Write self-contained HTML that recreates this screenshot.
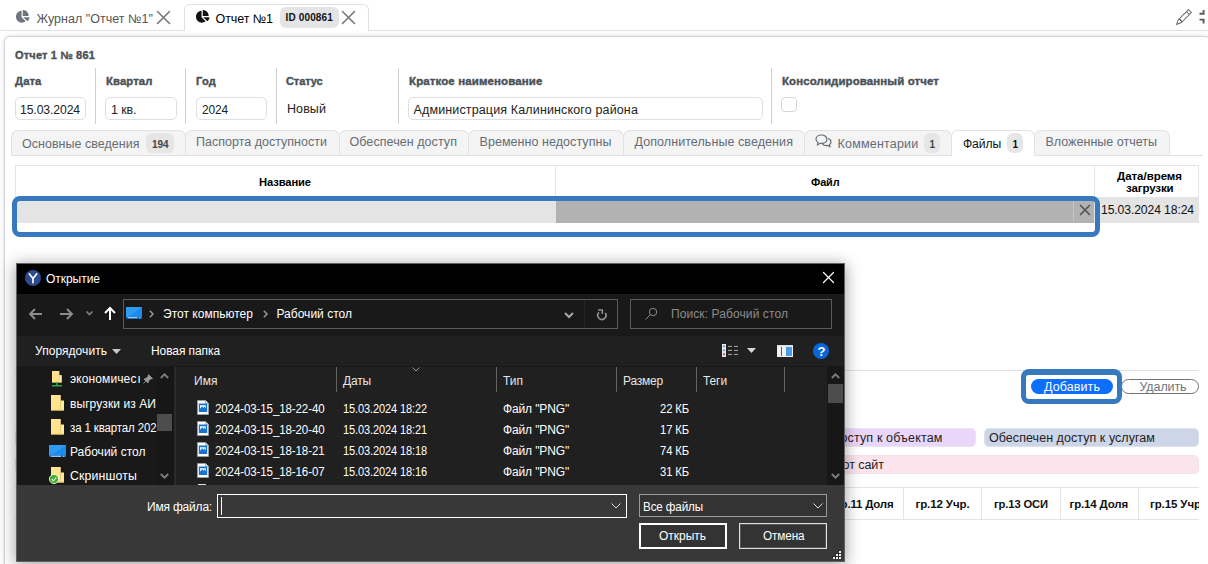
<!DOCTYPE html>
<html lang="ru"><head><meta charset="utf-8"><title>Отчет №1</title>
<style>
html,body{margin:0;padding:0;background:#fff;}
body{width:1208px;height:564px;overflow:hidden;position:relative;font-family:'Liberation Sans', sans-serif;}
div,span,svg{box-sizing:border-box;}
svg{position:absolute;overflow:visible;}
</style></head><body>
<div style="position:absolute;left:0px;top:30px;width:1208px;height:1px;background:#dee2e6;"></div><div style="position:absolute;left:184px;top:4px;width:185px;height:27px;border:1px solid #dee2e6;border-bottom:none;border-radius:6px 6px 0 0;background:#fff;"></div><svg style="left:16px;top:9.8px" width="13.500" height="12.700" viewBox="0 0 544 512"><path fill="#6c757d" d="M527.790 288H290.500l158.030 158.030c6.040 6.040 15.980 6.530 22.190.680 38.700-36.460 65.320-85.610 73.130-140.860 1.340-9.460-6.510-17.850-16.060-17.850zm-15.830-64.800C503.720 103.740 408.260 8.280 288.800.040 279.680-.590 272 7.100 272 16.240V240h223.770c9.140 0 16.820-7.680 16.190-16.800zM224 288V50.710c0-9.550-8.390-17.400-17.840-16.060C86.990 51.490-4.100 155.600.140 280.370 4.500 408.510 114.830 513.590 243.030 511.980c50.400-.630 96.970-16.870 135.260-44.030 7.900-5.600 8.420-17.230 1.570-24.080L224 288z"/></svg><span style="position:absolute;white-space:pre;left:36.5px;top:13.00px;font-size:12.5px;line-height:1;font-weight:400;color:#555;letter-spacing:0.028px;">Журнал &quot;Отчет №1&quot;</span><svg style="left:157px;top:11px" width="13" height="13" viewBox="0 0 13 13"><path d="M0.5 0.5L12.5 12.5M12.5 0.5L0.5 12.5" stroke="#777" stroke-width="1.6" fill="none" stroke-linecap="round"/></svg><svg style="left:196px;top:9.8px" width="13.500" height="12.700" viewBox="0 0 544 512"><path fill="#111" d="M527.790 288H290.500l158.030 158.030c6.040 6.040 15.980 6.530 22.190.680 38.700-36.460 65.320-85.610 73.130-140.860 1.340-9.460-6.510-17.850-16.060-17.850zm-15.830-64.800C503.720 103.740 408.260 8.280 288.800.040 279.680-.590 272 7.100 272 16.240V240h223.770c9.140 0 16.820-7.680 16.190-16.800zM224 288V50.710c0-9.550-8.390-17.400-17.840-16.060C86.990 51.490-4.100 155.600.140 280.370 4.500 408.510 114.830 513.590 243.030 511.980c50.400-.630 96.970-16.870 135.260-44.030 7.900-5.600 8.420-17.230 1.570-24.080L224 288z"/></svg><span style="position:absolute;white-space:pre;left:215.5px;top:13.00px;font-size:12.5px;line-height:1;font-weight:400;color:#000;letter-spacing:-0.070px;">Отчет №1</span><div style="position:absolute;left:280px;top:7px;width:59px;height:20.5px;background:#e3e4e6;border-radius:6px;"></div><span style="position:absolute;white-space:pre;left:285.5px;top:13.00px;font-size:10px;line-height:1;font-weight:700;color:#111;letter-spacing:0.149px;">ID 000861</span><svg style="left:342px;top:11px" width="13" height="13" viewBox="0 0 13 13"><path d="M0.5 0.5L12.5 12.5M12.5 0.5L0.5 12.5" stroke="#777" stroke-width="1.6" fill="none" stroke-linecap="round"/></svg><svg style="left:1176px;top:9px" width="16" height="16" viewBox="0 0 16 16"><path fill="#666b70" d="M12.146.146a.5.5 0 0 1 .708 0l3 3a.5.5 0 0 1 0 .708l-10 10a.5.5 0 0 1-.168.11l-5 2a.5.5 0 0 1-.65-.65l2-5a.5.5 0 0 1 .11-.168l10-10zM11.207 2.500 13.500 4.793 14.793 3.500 12.500 1.207 11.207 2.500zm1.586 3L10.500 3.207 4 9.707V10h.5a.5.500 0 0 1 .5.500v.5h.5a.5.500 0 0 1 .5.500v.5h.293l6.500-6.500zm-9.761 5.175-.106.106-1.528 3.821 3.821-1.528.106-.106A.5.500 0 0 1 5 12.500V12h-.5a.5.500 0 0 1-.5-.5V11h-.5a.5.500 0 0 1-.468-.325z"/></svg><svg style="left:1199px;top:9px" width="14" height="16" viewBox="0 0 14 16"><path d="M0.500 4.800H4.600V1M0.500 10.600H4.600V14.500" stroke="#565c64" stroke-width="1.900" fill="none"/></svg><div style="position:absolute;left:4px;top:36px;width:1207px;height:540px;border:1px solid #d0d3d7;border-radius:6px;background:#fff;box-shadow:0 0 5px rgba(0,0,0,.13);"></div><span style="position:absolute;white-space:pre;left:15px;top:50.00px;font-size:11px;line-height:1;font-weight:700;color:#4b5157;letter-spacing:0.185px;-webkit-text-stroke:0.400px #4b5157;">Отчет 1 № 861</span><span style="position:absolute;white-space:pre;left:15px;top:76.00px;font-size:11px;line-height:1;font-weight:700;color:#4b5157;letter-spacing:0.120px;transform:scaleX(1.0212);transform-origin:0 0;-webkit-text-stroke:0.400px #4b5157;">Дата</span><span style="position:absolute;white-space:pre;left:105.5px;top:76.00px;font-size:11px;line-height:1;font-weight:700;color:#4b5157;letter-spacing:0.120px;transform:scaleX(1.0252);transform-origin:0 0;-webkit-text-stroke:0.400px #4b5157;">Квартал</span><span style="position:absolute;white-space:pre;left:196px;top:76.00px;font-size:11px;line-height:1;font-weight:700;color:#4b5157;letter-spacing:0.250px;-webkit-text-stroke:0.400px #4b5157;">Год</span><span style="position:absolute;white-space:pre;left:286px;top:76.00px;font-size:11px;line-height:1;font-weight:700;color:#4b5157;letter-spacing:-0.096px;-webkit-text-stroke:0.400px #4b5157;">Статус</span><span style="position:absolute;white-space:pre;left:408.5px;top:76.00px;font-size:11px;line-height:1;font-weight:700;color:#4b5157;letter-spacing:0.120px;transform:scaleX(1.0430);transform-origin:0 0;-webkit-text-stroke:0.400px #4b5157;">Краткое наименование</span><span style="position:absolute;white-space:pre;left:781.5px;top:76.00px;font-size:11px;line-height:1;font-weight:700;color:#4b5157;letter-spacing:0.120px;transform:scaleX(1.0387);transform-origin:0 0;-webkit-text-stroke:0.400px #4b5157;">Консолидированный отчет</span><div style="position:absolute;left:95px;top:68px;width:1px;height:56px;background:#d0d0d0;"></div><div style="position:absolute;left:185px;top:68px;width:1px;height:56px;background:#d0d0d0;"></div><div style="position:absolute;left:276px;top:68px;width:1px;height:56px;background:#d0d0d0;"></div><div style="position:absolute;left:398px;top:68px;width:1px;height:56px;background:#d0d0d0;"></div><div style="position:absolute;left:771px;top:68px;width:1px;height:56px;background:#d0d0d0;"></div><div style="position:absolute;left:15px;top:97px;width:71px;height:23px;border:1px solid #dcdfe3;border-radius:5px;background:#fff;"></div><span style="position:absolute;white-space:pre;left:20px;top:104.00px;font-size:12.5px;line-height:1;font-weight:400;color:#222;letter-spacing:-0.120px;transform:scaleX(0.9778);transform-origin:0 0;">15.03.2024</span><div style="position:absolute;left:105px;top:97px;width:72px;height:23px;border:1px solid #dcdfe3;border-radius:5px;background:#fff;"></div><span style="position:absolute;white-space:pre;left:111px;top:104.00px;font-size:12.5px;line-height:1;font-weight:400;color:#222;letter-spacing:-0.103px;">1 кв.</span><div style="position:absolute;left:196px;top:97px;width:71px;height:23px;border:1px solid #dcdfe3;border-radius:5px;background:#fff;"></div><span style="position:absolute;white-space:pre;left:202px;top:104.00px;font-size:12.5px;line-height:1;font-weight:400;color:#222;letter-spacing:-0.120px;transform:scaleX(0.9512);transform-origin:0 0;">2024</span><span style="position:absolute;white-space:pre;left:287px;top:103.00px;font-size:12.5px;line-height:1;font-weight:400;color:#222;letter-spacing:0.081px;">Новый</span><div style="position:absolute;left:408px;top:97px;width:355px;height:23px;border:1px solid #dcdfe3;border-radius:5px;background:#fff;"></div><span style="position:absolute;white-space:pre;left:413.5px;top:104.00px;font-size:12.5px;line-height:1;font-weight:400;color:#222;letter-spacing:0.140px;">Администрация Калининского района</span><div style="position:absolute;left:781px;top:97px;width:16px;height:15px;border:1px solid #d5d8dc;border-radius:4px;background:#fff;"></div><div style="position:absolute;left:11px;top:155px;width:1192px;height:1px;background:#dfe2e5;"></div><div style="position:absolute;left:11px;top:130px;width:175px;height:25px;border:1px solid #dfe2e5;border-bottom:none;border-radius:7px 7px 0 0;background:#f4f4f4;"></div><div style="position:absolute;left:185px;top:130px;width:155px;height:25px;border:1px solid #dfe2e5;border-bottom:none;border-radius:7px 7px 0 0;background:#f4f4f4;"></div><div style="position:absolute;left:339px;top:130px;width:130px;height:25px;border:1px solid #dfe2e5;border-bottom:none;border-radius:7px 7px 0 0;background:#f4f4f4;"></div><div style="position:absolute;left:468px;top:130px;width:156px;height:25px;border:1px solid #dfe2e5;border-bottom:none;border-radius:7px 7px 0 0;background:#f4f4f4;"></div><div style="position:absolute;left:623px;top:130px;width:182px;height:25px;border:1px solid #dfe2e5;border-bottom:none;border-radius:7px 7px 0 0;background:#f4f4f4;"></div><div style="position:absolute;left:804px;top:130px;width:148px;height:25px;border:1px solid #dfe2e5;border-bottom:none;border-radius:7px 7px 0 0;background:#f4f4f4;"></div><div style="position:absolute;left:951px;top:130px;width:84px;height:26px;border:1px solid #dfe2e5;border-bottom:none;border-radius:7px 7px 0 0;background:#fff;"></div><div style="position:absolute;left:1034px;top:130px;width:136px;height:25px;border:1px solid #dfe2e5;border-bottom:none;border-radius:7px 7px 0 0;background:#f4f4f4;"></div><span style="position:absolute;white-space:pre;left:22px;top:138.00px;font-size:12.5px;line-height:1;font-weight:400;color:#646c74;letter-spacing:0.023px;">Основные сведения</span><div style="position:absolute;left:146px;top:133px;width:28px;height:20px;background:#e6e6e6;border-radius:6px;"></div><span style="position:absolute;white-space:pre;left:152px;top:140.00px;font-size:10px;line-height:1;font-weight:700;color:#444;letter-spacing:-0.062px;">194</span><span style="position:absolute;white-space:pre;left:196px;top:136.00px;font-size:12.5px;line-height:1;font-weight:400;color:#646c74;letter-spacing:0.010px;">Паспорта доступности</span><span style="position:absolute;white-space:pre;left:349.5px;top:136.00px;font-size:12.5px;line-height:1;font-weight:400;color:#646c74;letter-spacing:0.063px;">Обеспечен доступ</span><span style="position:absolute;white-space:pre;left:479.5px;top:136.00px;font-size:12.5px;line-height:1;font-weight:400;color:#646c74;letter-spacing:0.059px;">Временно недоступны</span><span style="position:absolute;white-space:pre;left:634.5px;top:136.00px;font-size:12.5px;line-height:1;font-weight:400;color:#646c74;letter-spacing:0.075px;">Дополнительные сведения</span><svg style="left:815px;top:134px" width="17" height="14" viewBox="0 0 17 14"><path d="M6.5 1C3.500 1 1 2.800 1 5.200c0 1.300.8 2.500 2 3.200L2.500 10.800 5.200 9.300c.4.100.8.100 1.300.100 3 0 5.500-1.800 5.500-4.200S9.500 1 6.500 1z" fill="none" stroke="#646c74" stroke-width="1.200"/><path d="M13.300 4.500c1.600.6 2.700 1.900 2.700 3.400 0 1.100-.6 2.100-1.600 2.800l.5 2-2.300-1.200c-.4.100-.8.100-1.200.100-1.800 0-3.300-.7-4.100-1.800" fill="none" stroke="#646c74" stroke-width="1.200"/></svg><span style="position:absolute;white-space:pre;left:837.5px;top:138.00px;font-size:12.5px;line-height:1;font-weight:400;color:#646c74;letter-spacing:0.206px;">Комментарии</span><div style="position:absolute;left:924px;top:133px;width:16px;height:20px;background:#e6e6e6;border-radius:6px;"></div><span style="position:absolute;white-space:pre;left:929.5px;top:140.00px;font-size:10px;line-height:1;font-weight:700;color:#444;">1</span><span style="position:absolute;white-space:pre;left:963px;top:138.00px;font-size:12.5px;line-height:1;font-weight:400;color:#111;letter-spacing:-0.120px;transform:scaleX(0.9714);transform-origin:0 0;">Файлы</span><div style="position:absolute;left:1007px;top:133px;width:16px;height:20px;background:#e6e6e6;border-radius:6px;"></div><span style="position:absolute;white-space:pre;left:1012.5px;top:140.00px;font-size:10px;line-height:1;font-weight:700;color:#111;">1</span><span style="position:absolute;white-space:pre;left:1045.5px;top:136.00px;font-size:12.5px;line-height:1;font-weight:400;color:#646c74;letter-spacing:0.014px;">Вложенные отчеты</span><div style="position:absolute;left:15px;top:165px;width:1184px;height:33px;border:1px solid #e3e5e8;border-bottom:none;"></div><div style="position:absolute;left:555px;top:165px;width:1px;height:32px;background:#e3e5e8;"></div><div style="position:absolute;left:1094px;top:165px;width:1px;height:32px;background:#e3e5e8;"></div><span style="position:absolute;white-space:pre;left:259px;top:177.00px;font-size:11.5px;line-height:1;font-weight:700;color:#000;letter-spacing:-0.120px;transform:scaleX(0.9749);transform-origin:0 0;">Название</span><span style="position:absolute;white-space:pre;left:810.5px;top:177.00px;font-size:11.5px;line-height:1;font-weight:700;color:#000;letter-spacing:-0.120px;transform:scaleX(0.9464);transform-origin:0 0;">Файл</span><span style="position:absolute;white-space:pre;left:1117px;top:171.00px;font-size:11.5px;line-height:1;font-weight:700;color:#000;letter-spacing:-0.037px;">Дата/время</span><span style="position:absolute;white-space:pre;left:1126px;top:183.00px;font-size:11.5px;line-height:1;font-weight:700;color:#000;letter-spacing:-0.115px;">загрузки</span><div style="position:absolute;left:15px;top:197px;width:541px;height:26px;background:#e4e4e4;"></div><div style="position:absolute;left:556px;top:197px;width:538px;height:26px;background:#b2b2b2;"></div><div style="position:absolute;left:1094px;top:197px;width:105px;height:26px;background:#e4e4e4;"></div><div style="position:absolute;left:1073px;top:198px;width:1px;height:24px;background:#c4c4c4;"></div><svg style="left:1079.5px;top:205px" width="10" height="10" viewBox="0 0 10 10"><path d="M0.5 0.5L9.5 9.5M9.5 0.5L0.5 9.5" stroke="#555" stroke-width="1.7" fill="none" stroke-linecap="round"/></svg><span style="position:absolute;white-space:pre;left:1101px;top:204.00px;font-size:12.5px;line-height:1;font-weight:400;color:#111;letter-spacing:-0.120px;transform:scaleX(0.9748);transform-origin:0 0;">15.03.2024 18:24</span><div style="position:absolute;left:12px;top:196px;width:1088px;height:41px;border:5px solid #3778bf;border-radius:8px;"></div><div style="position:absolute;left:15px;top:370px;width:1184px;height:1px;background:#dee2e6;"></div><div style="position:absolute;left:1021px;top:369px;width:100.5px;height:34.5px;border:5px solid #3778bf;border-top-width:6px;border-radius:8px;"></div><div style="position:absolute;left:1030.5px;top:379px;width:82.5px;height:15px;background:#0d6efd;border-radius:8px;"></div><span style="position:absolute;white-space:pre;left:1044px;top:381.00px;font-size:12.5px;line-height:1;font-weight:400;color:#fff;letter-spacing:0.094px;">Добавить</span><div style="position:absolute;left:1121px;top:379px;width:77.5px;height:15px;background:#fff;border:1px solid #6c757d;border-radius:8px;"></div><span style="position:absolute;white-space:pre;left:1139.5px;top:381.00px;font-size:12.5px;line-height:1;font-weight:400;color:#6c757d;letter-spacing:-0.105px;">Удалить</span><div style="position:absolute;left:15px;top:427.5px;width:960.5px;height:19.5px;background:#ead6fb;border-radius:5px;border:1px solid #e9e4f2;"></div><span style="position:absolute;white-space:pre;left:833px;top:432.00px;font-size:12.5px;line-height:1;font-weight:400;color:#222;letter-spacing:0.147px;">доступ к объектам</span><div style="position:absolute;left:984px;top:427.5px;width:214.5px;height:19.5px;background:#cdd5e8;border-radius:5px;border:1px solid #dde2ee;"></div><span style="position:absolute;white-space:pre;left:989px;top:432.00px;font-size:12.5px;line-height:1;font-weight:400;color:#222;letter-spacing:0.053px;">Обеспечен доступ к услугам</span><div style="position:absolute;left:15px;top:455px;width:1183.5px;height:18.5px;background:#fbe4ec;border-radius:5px;border:1px solid #f3e3e9;"></div><span style="position:absolute;white-space:pre;left:842.5px;top:459.00px;font-size:12.5px;line-height:1;font-weight:400;color:#222;letter-spacing:-0.042px;">от сайт</span><div style="position:absolute;left:15px;top:487px;width:1184px;height:1px;background:#e3e5e8;"></div><div style="position:absolute;left:15px;top:519px;width:1184px;height:1px;background:#e3e5e8;"></div><div style="position:absolute;left:903px;top:487px;width:1px;height:33px;background:#e3e5e8;"></div><div style="position:absolute;left:981px;top:487px;width:1px;height:33px;background:#e3e5e8;"></div><div style="position:absolute;left:1060px;top:487px;width:1px;height:33px;background:#e3e5e8;"></div><div style="position:absolute;left:1138px;top:487px;width:1px;height:33px;background:#e3e5e8;"></div><span style="position:absolute;white-space:pre;left:836px;top:499.00px;font-size:11.5px;line-height:1;font-weight:700;color:#111;letter-spacing:-0.195px;">гр.11 Доля</span><span style="position:absolute;white-space:pre;left:915.5px;top:499.00px;font-size:11.5px;line-height:1;font-weight:700;color:#111;letter-spacing:-0.105px;">гр.12 Учр.</span><span style="position:absolute;white-space:pre;left:993.5px;top:499.00px;font-size:11.5px;line-height:1;font-weight:700;color:#111;letter-spacing:-0.120px;transform:scaleX(0.9741);transform-origin:0 0;">гр.13 ОСИ</span><span style="position:absolute;white-space:pre;left:1069.5px;top:499.00px;font-size:11.5px;line-height:1;font-weight:700;color:#111;letter-spacing:-0.159px;">гр.14 Доля</span><span style="position:absolute;white-space:pre;left:1150px;top:499.00px;font-size:11.5px;line-height:1;font-weight:700;color:#111;letter-spacing:-0.105px;">гр.15 Учр.</span><div style="position:absolute;left:1199px;top:480px;width:9px;height:50px;background:#fff;"></div><div style="position:absolute;left:16px;top:263px;width:829px;height:299px;background:#626262;box-shadow:0 2px 14px 1px rgba(0,0,0,.36);"></div><div style="position:absolute;left:17px;top:264px;width:827px;height:297px;background:#383838;"></div><div style="position:absolute;left:17px;top:264px;width:827px;height:30px;background:#000;"></div><div style="position:absolute;left:17px;top:294px;width:827px;height:42px;background:#191919;"></div><div style="position:absolute;left:17px;top:336px;width:827px;height:30px;background:#202020;"></div><div style="position:absolute;left:17px;top:366px;width:157px;height:119px;background:#191919;"></div><div style="position:absolute;left:157px;top:366px;width:17px;height:119px;background:#171717;"></div><div style="position:absolute;left:174px;top:366px;width:2px;height:119px;background:#2b2b2b;"></div><div style="position:absolute;left:176px;top:366px;width:652px;height:119px;background:#202020;"></div><div style="position:absolute;left:827px;top:366px;width:17px;height:119px;background:#171717;"></div><div style="position:absolute;left:17px;top:366px;width:810px;height:1px;background:#191919;"></div><svg style="left:25px;top:270px" width="16" height="16" viewBox="0 0 16 16"><circle cx="8" cy="8" r="8" fill="#2c4a8c"/><path d="M4.200 3.800L8 8.600V12.800M11.800 3.800L8 8.600" stroke="#fff" stroke-width="1.650" fill="none" stroke-linecap="round" stroke-linejoin="round"/></svg><span style="position:absolute;white-space:pre;left:46px;top:273.00px;font-size:12px;line-height:1;font-weight:400;color:#fff;letter-spacing:-0.033px;">Открытие</span><svg style="left:823px;top:272px" width="11" height="11" viewBox="0 0 11 11"><path d="M0.5 0.5L10.5 10.5M10.5 0.5L0.5 10.5" stroke="#fff" stroke-width="1.2" fill="none" stroke-linecap="round"/></svg><svg style="left:29px;top:308px" width="14" height="12" viewBox="0 0 14 12"><path d="M6 1L1 6L6 11M1 6H13" stroke="#8c8c8c" stroke-width="1.900" fill="none"/></svg><svg style="left:59px;top:308px" width="14" height="12" viewBox="0 0 14 12"><path d="M8 1L13 6L8 11M13 6H1" stroke="#8c8c8c" stroke-width="1.900" fill="none"/></svg><svg style="left:86px;top:311px" width="7" height="5" viewBox="0 0 7 5"><path d="M0.500 0.500L3.500 3.500L6.500 0.500" stroke="#808080" stroke-width="1.700" fill="none"/></svg><svg style="left:104px;top:307px" width="12" height="14" viewBox="0 0 12 14"><path d="M1 6L6 1L11 6M6 1V13" stroke="#fff" stroke-width="2" fill="none"/></svg><div style="position:absolute;left:123px;top:299px;width:495px;height:30px;border:1px solid #5a5a5a;background:#191919;"></div><div style="position:absolute;left:584px;top:300px;width:1px;height:28px;background:#252525;"></div><svg style="left:126px;top:307px" width="16" height="11.500" viewBox="0 0 17 12" preserveAspectRatio="none"><rect x="0" y="0" width="17" height="12" fill="#2f9bf2"/><path d="M0 12L17 0V12Z" fill="#1a8cf0"/><rect x="0" y="10.500" width="17" height="1.500" fill="#0a5fb5"/><rect x="2" y="10.800" width="10" height="0.800" fill="#fff"/><rect x="14" y="10.800" width="1.500" height="0.800" fill="#fff"/></svg><svg style="left:149px;top:310px" width="5" height="8" viewBox="0 0 5 8"><path d="M0.800 0.800L4 4L0.800 7.200" stroke="#999" stroke-width="1.500" fill="none"/></svg><span style="position:absolute;white-space:pre;left:163px;top:308.00px;font-size:12px;line-height:1;font-weight:400;color:#fff;letter-spacing:0.019px;">Этот компьютер</span><svg style="left:263px;top:310px" width="5" height="8" viewBox="0 0 5 8"><path d="M0.800 0.800L4 4L0.800 7.200" stroke="#999" stroke-width="1.500" fill="none"/></svg><span style="position:absolute;white-space:pre;left:276.5px;top:308.00px;font-size:12px;line-height:1;font-weight:400;color:#fff;letter-spacing:0.014px;">Рабочий стол</span><svg style="left:564px;top:312px" width="10" height="7" viewBox="0 0 10 7"><path d="M1 1L5 5L9 1" stroke="#a8a8a8" stroke-width="2" fill="none"/></svg><svg style="left:590px;top:304px" width="24" height="22" viewBox="590 304 24 22"><path d="M605.300 313A4.100 4.100 0 1 1 599 312.400" stroke="#8e8e8e" stroke-width="1.700" fill="none"/><path d="M598 310H602.300V314" stroke="#8e8e8e" stroke-width="1.600" fill="none"/></svg><div style="position:absolute;left:630px;top:299px;width:202px;height:30px;border:1px solid #5a5a5a;background:#191919;"></div><svg style="left:645px;top:307px" width="13" height="13" viewBox="0 0 13 13"><circle cx="8" cy="5" r="3.700" stroke="#8a8a8a" stroke-width="1" fill="none"/><path d="M5.400 7.600L0.500 12.500" stroke="#8a8a8a" stroke-width="1"/></svg><span style="position:absolute;white-space:pre;left:671px;top:308.00px;font-size:12px;line-height:1;font-weight:400;color:#8c8c8c;letter-spacing:0.092px;">Поиск: Рабочий стол</span><span style="position:absolute;white-space:pre;left:35px;top:345.00px;font-size:12px;line-height:1;font-weight:400;color:#fff;letter-spacing:0.053px;">Упорядочить</span><svg style="left:112px;top:349px" width="9" height="5" viewBox="0 0 9 5"><path d="M0 0H9L4.500 5Z" fill="#c8c8c8"/></svg><span style="position:absolute;white-space:pre;left:151px;top:345.00px;font-size:12px;line-height:1;font-weight:400;color:#fff;letter-spacing:-0.087px;">Новая папка</span><svg style="left:722px;top:344px" width="17" height="13" viewBox="0 0 17 13"><rect x="0" y="0" width="4" height="13" fill="#e8e8e8"/><rect x="1.200" y="1.5" width="1.600" height="1.600" fill="#4a7fc0"/><rect x="6" y="1.9" width="4" height="0.900" fill="#bbb"/><rect x="12" y="1.9" width="4" height="0.900" fill="#bbb"/><rect x="1.200" y="5.5" width="1.600" height="1.600" fill="#4a7fc0"/><rect x="6" y="5.9" width="4" height="0.900" fill="#bbb"/><rect x="12" y="5.9" width="4" height="0.900" fill="#bbb"/><rect x="1.200" y="9.5" width="1.600" height="1.600" fill="#4a7fc0"/><rect x="6" y="9.9" width="4" height="0.900" fill="#bbb"/><rect x="12" y="9.9" width="4" height="0.900" fill="#bbb"/><rect x="1.200" y="9.500" width="1.600" height="1.600" fill="#d04040"/></svg><svg style="left:747px;top:348px" width="9" height="5" viewBox="0 0 9 5"><path d="M0 0H9L4.500 5Z" fill="#d8d8d8"/></svg><svg style="left:777px;top:345px" width="16" height="12" viewBox="0 0 16 12"><rect x="0" y="0" width="16" height="12" fill="#f2f2f2"/><rect x="9" y="2" width="6" height="9" fill="#4a9be8"/><rect x="4" y="2" width="1" height="9" fill="#555"/><rect x="0" y="0" width="16" height="1.500" fill="#ddd"/></svg><svg style="left:813px;top:343px" width="16" height="16" viewBox="0 0 16 16"><circle cx="8" cy="8" r="8" fill="#0a66d8"/></svg><span style="position:absolute;white-space:pre;left:817.5px;top:345.00px;font-size:13px;line-height:1;font-weight:700;color:#fff;">?</span><svg style="left:52px;top:371px" width="9.8" height="11.5" viewBox="0 0 13 15.500" preserveAspectRatio="none"><path d="M0 0H9.800V15.500H0Z" fill="#ffe38f"/><path d="M9.300 5.500H13V15.500H9.300Z" fill="#ffe9a6"/><path d="M9.500 5.500V15.500" stroke="#e9c766" stroke-width=".8"/><path d="M0 14.500H13V15.500H0Z" fill="#f3cf6a" opacity=".7"/></svg><svg style="left:52px;top:382px" width="10" height="5" viewBox="0 0 10 5"><path d="M5 0V3.500" stroke="#25a83a" stroke-width="1.600" fill="none"/><path d="M0 3.800H10" stroke="#2fc14a" stroke-width="1.300" fill="none"/></svg><span style="position:absolute;white-space:pre;left:70px;top:373.00px;font-size:12px;line-height:1;font-weight:400;color:#fff;letter-spacing:0.113px;">экономичес</span><span style="position:absolute;white-space:pre;left:137.8px;top:373.00px;font-size:12px;line-height:1;font-weight:400;color:#fff;width:2.300px;overflow:hidden;">к</span><svg style="left:143px;top:374px" width="10" height="10" viewBox="0 0 10 10"><path d="M5.500 0.500L9.500 4.500L7.500 5L5.500 7L5 9L1 5L3 4.500L5 2.500ZM3 7L0.500 9.500" fill="#9a9a9a" stroke="#9a9a9a" stroke-width=".8"/></svg><svg style="left:160px;top:373px" width="9" height="6" viewBox="0 0 9 6"><path d="M0.800 5L4.500 1.300L8.200 5" stroke="#7d7d7d" stroke-width="1.900" fill="none"/></svg><svg style="left:51px;top:395px" width="13" height="15.5" viewBox="0 0 13 15.500" preserveAspectRatio="none"><path d="M0 0H9.800V15.500H0Z" fill="#ffe38f"/><path d="M9.300 5.500H13V15.500H9.300Z" fill="#ffe9a6"/><path d="M9.500 5.500V15.500" stroke="#e9c766" stroke-width=".8"/><path d="M0 14.500H13V15.500H0Z" fill="#f3cf6a" opacity=".7"/></svg><span style="position:absolute;white-space:pre;left:70px;top:398.00px;font-size:12px;line-height:1;font-weight:400;color:#fff;letter-spacing:0.080px;">выгрузки из АИ</span><svg style="left:51px;top:419px" width="13" height="15.5" viewBox="0 0 13 15.500" preserveAspectRatio="none"><path d="M0 0H9.800V15.500H0Z" fill="#ffe38f"/><path d="M9.300 5.500H13V15.500H9.300Z" fill="#ffe9a6"/><path d="M9.500 5.500V15.500" stroke="#e9c766" stroke-width=".8"/><path d="M0 14.500H13V15.500H0Z" fill="#f3cf6a" opacity=".7"/></svg><span style="position:absolute;white-space:pre;left:70px;top:422.00px;font-size:12px;line-height:1;font-weight:400;color:#fff;letter-spacing:-0.120px;transform:scaleX(0.9551);transform-origin:0 0;">за 1 квартал 202</span><div style="position:absolute;left:157px;top:414px;width:15px;height:17px;background:#4d4d4d;"></div><svg style="left:49px;top:445px" width="17" height="12" viewBox="0 0 17 12"><rect x="0" y="0" width="17" height="12" fill="#2f9bf2"/><path d="M0 12L17 0V12Z" fill="#1a8cf0"/><rect x="0" y="10.500" width="17" height="1.500" fill="#0a5fb5"/><rect x="2" y="10.800" width="10" height="0.800" fill="#fff"/><rect x="14" y="10.800" width="1.500" height="0.800" fill="#fff"/></svg><span style="position:absolute;white-space:pre;left:70px;top:446.00px;font-size:12px;line-height:1;font-weight:400;color:#fff;letter-spacing:0.014px;">Рабочий стол</span><svg style="left:51px;top:467px" width="13" height="15.5" viewBox="0 0 13 15.500" preserveAspectRatio="none"><path d="M0 0H9.800V15.500H0Z" fill="#ffe38f"/><path d="M9.300 5.500H13V15.500H9.300Z" fill="#ffe9a6"/><path d="M9.500 5.500V15.500" stroke="#e9c766" stroke-width=".8"/><path d="M0 14.500H13V15.500H0Z" fill="#f3cf6a" opacity=".7"/></svg><svg style="left:49px;top:474px" width="10" height="10" viewBox="0 0 10 10"><circle cx="5" cy="5" r="4.600" fill="#43b02a" stroke="#fff" stroke-width=".8"/><path d="M2.800 5.200L4.400 6.800L7.300 3.600" stroke="#fff" stroke-width="1.100" fill="none"/></svg><span style="position:absolute;white-space:pre;left:70px;top:470.00px;font-size:12px;line-height:1;font-weight:400;color:#fff;letter-spacing:0.120px;transform:scaleX(1.0283);transform-origin:0 0;">Скриншоты</span><svg style="left:160px;top:473px" width="9" height="6" viewBox="0 0 9 6"><path d="M0.800 1L4.500 4.700L8.200 1" stroke="#7d7d7d" stroke-width="1.900" fill="none"/></svg><span style="position:absolute;white-space:pre;left:194px;top:375.00px;font-size:12px;line-height:1;font-weight:400;color:#e6e6e6;letter-spacing:0.042px;">Имя</span><span style="position:absolute;white-space:pre;left:343px;top:375.00px;font-size:12px;line-height:1;font-weight:400;color:#e6e6e6;letter-spacing:-0.168px;">Даты</span><span style="position:absolute;white-space:pre;left:503px;top:375.00px;font-size:12px;line-height:1;font-weight:400;color:#e6e6e6;letter-spacing:-0.005px;">Тип</span><span style="position:absolute;white-space:pre;left:623px;top:375.00px;font-size:12px;line-height:1;font-weight:400;color:#e6e6e6;letter-spacing:-0.208px;">Размер</span><span style="position:absolute;white-space:pre;left:703px;top:375.00px;font-size:12px;line-height:1;font-weight:400;color:#e6e6e6;letter-spacing:-0.105px;">Теги</span><div style="position:absolute;left:336px;top:367px;width:1px;height:25px;background:#636363;"></div><div style="position:absolute;left:496px;top:367px;width:1px;height:25px;background:#636363;"></div><div style="position:absolute;left:616px;top:367px;width:1px;height:25px;background:#636363;"></div><div style="position:absolute;left:696px;top:367px;width:1px;height:25px;background:#636363;"></div><div style="position:absolute;left:784px;top:367px;width:1px;height:25px;background:#636363;"></div><svg style="left:412px;top:367px" width="8" height="5" viewBox="0 0 8 5"><path d="M0.500 0.500L4 4L7.500 0.500" stroke="#9a9a9a" stroke-width="1" fill="none"/></svg><svg style="left:197px;top:400px" width="12" height="15" viewBox="0 0 12 15"><path d="M0.500 0.500H8.500L11.500 3.500V14.500H0.500Z" fill="#fff" stroke="#9aa0a8" stroke-width=".8"/><path d="M8.500 0.500V3.500H11.500" fill="#dfe3e8" stroke="#9aa0a8" stroke-width=".6"/><rect x="1.800" y="3.500" width="8.400" height="8.500" fill="#1673d1"/><path d="M3 5.200H8.800V8.500L7.600 6.500L6.500 8L5.200 6.300L3 8.800Z" fill="#fff" opacity=".95"/></svg><span style="position:absolute;white-space:pre;left:215px;top:403.00px;font-size:12px;line-height:1;font-weight:400;color:#fff;letter-spacing:-0.120px;transform:scaleX(0.9621);transform-origin:0 0;">2024-03-15_18-22-40</span><span style="position:absolute;white-space:pre;left:343px;top:403.00px;font-size:12px;line-height:1;font-weight:400;color:#fff;letter-spacing:-0.120px;transform:scaleX(0.9180);transform-origin:0 0;">15.03.2024 18:22</span><span style="position:absolute;white-space:pre;left:503px;top:403.00px;font-size:12px;line-height:1;font-weight:400;color:#fff;letter-spacing:-0.136px;">Файл &quot;PNG&quot;</span><span style="position:absolute;white-space:pre;left:660px;top:403.00px;font-size:12px;line-height:1;font-weight:400;color:#fff;letter-spacing:-0.120px;transform:scaleX(0.9371);transform-origin:0 0;">22 КБ</span><svg style="left:197px;top:421px" width="12" height="15" viewBox="0 0 12 15"><path d="M0.500 0.500H8.500L11.500 3.500V14.500H0.500Z" fill="#fff" stroke="#9aa0a8" stroke-width=".8"/><path d="M8.500 0.500V3.500H11.500" fill="#dfe3e8" stroke="#9aa0a8" stroke-width=".6"/><rect x="1.800" y="3.500" width="8.400" height="8.500" fill="#1673d1"/><path d="M3 5.200H8.800V8.500L7.600 6.500L6.500 8L5.200 6.300L3 8.800Z" fill="#fff" opacity=".95"/></svg><span style="position:absolute;white-space:pre;left:215px;top:424.00px;font-size:12px;line-height:1;font-weight:400;color:#fff;letter-spacing:-0.120px;transform:scaleX(0.9621);transform-origin:0 0;">2024-03-15_18-20-40</span><span style="position:absolute;white-space:pre;left:343px;top:424.00px;font-size:12px;line-height:1;font-weight:400;color:#fff;letter-spacing:-0.120px;transform:scaleX(0.9180);transform-origin:0 0;">15.03.2024 18:21</span><span style="position:absolute;white-space:pre;left:503px;top:424.00px;font-size:12px;line-height:1;font-weight:400;color:#fff;letter-spacing:-0.136px;">Файл &quot;PNG&quot;</span><span style="position:absolute;white-space:pre;left:660px;top:424.00px;font-size:12px;line-height:1;font-weight:400;color:#fff;letter-spacing:-0.120px;transform:scaleX(0.9371);transform-origin:0 0;">17 КБ</span><svg style="left:197px;top:442px" width="12" height="15" viewBox="0 0 12 15"><path d="M0.500 0.500H8.500L11.500 3.500V14.500H0.500Z" fill="#fff" stroke="#9aa0a8" stroke-width=".8"/><path d="M8.500 0.500V3.500H11.500" fill="#dfe3e8" stroke="#9aa0a8" stroke-width=".6"/><rect x="1.800" y="3.500" width="8.400" height="8.500" fill="#1673d1"/><path d="M3 5.200H8.800V8.500L7.600 6.500L6.500 8L5.200 6.300L3 8.800Z" fill="#fff" opacity=".95"/></svg><span style="position:absolute;white-space:pre;left:215px;top:445.00px;font-size:12px;line-height:1;font-weight:400;color:#fff;letter-spacing:-0.120px;transform:scaleX(0.9621);transform-origin:0 0;">2024-03-15_18-18-21</span><span style="position:absolute;white-space:pre;left:343px;top:445.00px;font-size:12px;line-height:1;font-weight:400;color:#fff;letter-spacing:-0.120px;transform:scaleX(0.9180);transform-origin:0 0;">15.03.2024 18:18</span><span style="position:absolute;white-space:pre;left:503px;top:445.00px;font-size:12px;line-height:1;font-weight:400;color:#fff;letter-spacing:-0.136px;">Файл &quot;PNG&quot;</span><span style="position:absolute;white-space:pre;left:660px;top:445.00px;font-size:12px;line-height:1;font-weight:400;color:#fff;letter-spacing:-0.120px;transform:scaleX(0.9371);transform-origin:0 0;">74 КБ</span><svg style="left:197px;top:463px" width="12" height="15" viewBox="0 0 12 15"><path d="M0.500 0.500H8.500L11.500 3.500V14.500H0.500Z" fill="#fff" stroke="#9aa0a8" stroke-width=".8"/><path d="M8.500 0.500V3.500H11.500" fill="#dfe3e8" stroke="#9aa0a8" stroke-width=".6"/><rect x="1.800" y="3.500" width="8.400" height="8.500" fill="#1673d1"/><path d="M3 5.200H8.800V8.500L7.600 6.500L6.500 8L5.200 6.300L3 8.800Z" fill="#fff" opacity=".95"/></svg><span style="position:absolute;white-space:pre;left:215px;top:466.00px;font-size:12px;line-height:1;font-weight:400;color:#fff;letter-spacing:-0.120px;transform:scaleX(0.9621);transform-origin:0 0;">2024-03-15_18-16-07</span><span style="position:absolute;white-space:pre;left:343px;top:466.00px;font-size:12px;line-height:1;font-weight:400;color:#fff;letter-spacing:-0.120px;transform:scaleX(0.9180);transform-origin:0 0;">15.03.2024 18:16</span><span style="position:absolute;white-space:pre;left:503px;top:466.00px;font-size:12px;line-height:1;font-weight:400;color:#fff;letter-spacing:-0.136px;">Файл &quot;PNG&quot;</span><span style="position:absolute;white-space:pre;left:660px;top:466.00px;font-size:12px;line-height:1;font-weight:400;color:#fff;letter-spacing:-0.120px;transform:scaleX(0.9371);transform-origin:0 0;">31 КБ</span><div style="position:absolute;left:198px;top:484px;width:8px;height:1px;background:#ddd;"></div><svg style="left:830.500px;top:373px" width="9" height="6" viewBox="0 0 9 6"><path d="M0.800 5L4.500 1.300L8.200 5" stroke="#7d7d7d" stroke-width="1.900" fill="none"/></svg><div style="position:absolute;left:828px;top:384px;width:15px;height:19px;background:#4d4d4d;"></div><svg style="left:830.500px;top:473px" width="9" height="6" viewBox="0 0 9 6"><path d="M0.800 1L4.500 4.700L8.200 1" stroke="#7d7d7d" stroke-width="1.900" fill="none"/></svg><span style="position:absolute;white-space:pre;left:147px;top:501.00px;font-size:12px;line-height:1;font-weight:400;color:#fff;letter-spacing:-0.197px;">Имя файла:</span><div style="position:absolute;left:217px;top:494px;width:410px;height:24px;border:1px solid #fff;background:#383838;"></div><div style="position:absolute;left:221px;top:497px;width:1px;height:18px;background:#fff;"></div><svg style="left:611px;top:503px" width="10" height="6" viewBox="0 0 10 6"><path d="M0.500 0.500L5 5L9.500 0.500" stroke="#ddd" stroke-width="1" fill="none"/></svg><div style="position:absolute;left:639px;top:494px;width:188px;height:23px;border:1px solid #9a9a9a;background:#333;"></div><span style="position:absolute;white-space:pre;left:643px;top:501.00px;font-size:12px;line-height:1;font-weight:400;color:#fff;letter-spacing:-0.120px;transform:scaleX(0.9707);transform-origin:0 0;">Все файлы</span><svg style="left:813px;top:503px" width="10" height="6" viewBox="0 0 10 6"><path d="M0.500 0.500L5 5L9.500 0.500" stroke="#ddd" stroke-width="1" fill="none"/></svg><div style="position:absolute;left:639px;top:523px;width:88px;height:26px;border:2px solid #fff;background:#333;"></div><span style="position:absolute;white-space:pre;left:659px;top:530.00px;font-size:12px;line-height:1;font-weight:400;color:#fff;letter-spacing:-0.020px;">Открыть</span><div style="position:absolute;left:739px;top:523px;width:88px;height:26px;border:1px solid #e0e0e0;background:#333;box-shadow:inset 0 0 0 1px #555;"></div><span style="position:absolute;white-space:pre;left:762.5px;top:530.00px;font-size:12px;line-height:1;font-weight:400;color:#fff;letter-spacing:-0.120px;transform:scaleX(0.9801);transform-origin:0 0;">Отмена</span><svg style="left:832px;top:550px" width="10" height="10" viewBox="0 0 10 10"><rect x="6" y="0" width="2" height="2" fill="#262626"/><rect x="3" y="3" width="2" height="2" fill="#262626"/><rect x="6" y="3" width="2" height="2" fill="#262626"/><rect x="0" y="6" width="2" height="2" fill="#262626"/><rect x="3" y="6" width="2" height="2" fill="#262626"/><rect x="6" y="6" width="2" height="2" fill="#262626"/><rect x="7" y="1" width="2" height="2" fill="#efefef"/><rect x="4" y="4" width="2" height="2" fill="#efefef"/><rect x="7" y="4" width="2" height="2" fill="#efefef"/><rect x="1" y="7" width="2" height="2" fill="#efefef"/><rect x="4" y="7" width="2" height="2" fill="#efefef"/><rect x="7" y="7" width="2" height="2" fill="#efefef"/></svg>
</body></html>
